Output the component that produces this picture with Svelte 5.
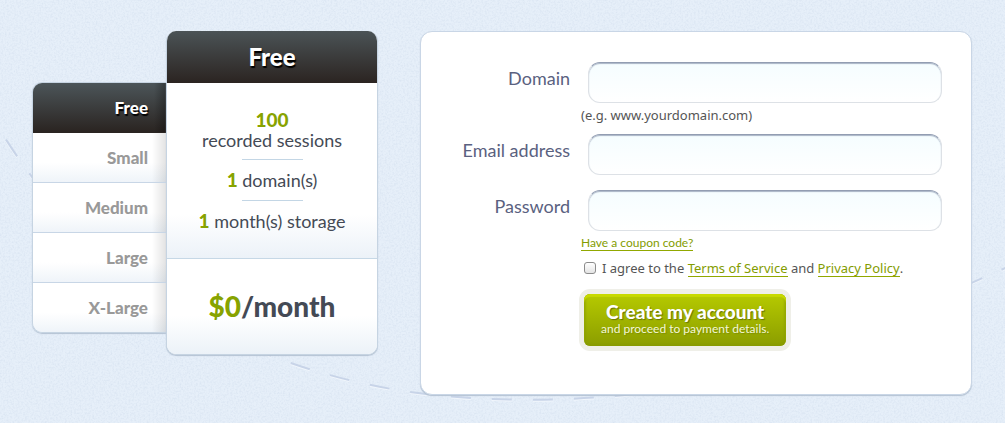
<script>
  const plans = ['Free', 'Small', 'Medium', 'Large', 'X-Large'];
  let selected = $state('Free');

  const fields = [
    { id: 'domain', label: 'Domain', type: 'text', hint: '(e.g. www.yourdomain.com)' },
    { id: 'email', label: 'Email address', type: 'email' },
    { id: 'password', label: 'Password', type: 'password' }
  ];
</script>

<main>
  <svg class="backdrop" aria-hidden="true">
    <filter id="linen" x="0" y="0" width="100%" height="100%">
      <feTurbulence type="fractalNoise" baseFrequency="0.55" numOctaves="3" seed="4" />
      <feColorMatrix values="0 0 0 0 0.6  0 0 0 0 0.69  0 0 0 0 0.82  0.9 0 0 0 -0.35" />
    </filter>
    <rect width="100%" height="100%" filter="url(#linen)" />
    <path class="stitch light" d="M-10 114C90 290 250 369 410 393C590 417 780 382 880 328Q945 295 1010 267" />
    <path class="stitch" d="M-10 113C90 289 250 368 410 392C590 416 780 381 880 327Q945 294 1010 266" />
  </svg>

  <section class="plans">
    <nav>
      {#each plans as plan}
        <button type="button" class="tab" class:active={plan === selected} onclick={() => (selected = plan)}>{plan}</button>
      {/each}
    </nav>
    <article>
      <h2>Free</h2>
      <ul>
        <li class="stacked"><b>100</b>recorded sessions</li>
        <li><b>1</b> domain(s)</li>
        <li><b>1</b> month(s) storage</li>
      </ul>
      <p class="price"><span>$0</span>/month</p>
    </article>
  </section>

  <form onsubmit={(e) => e.preventDefault()}>
    {#each fields as field}
      <div class="field">
        <label for={field.id}>{field.label}</label>
        <input class="text" id={field.id} type={field.type} />
        {#if field.hint}<small>{field.hint}</small>{/if}
      </div>
    {/each}
    <div class="extras">
      <a class="coupon" href="#coupon">Have a coupon code?</a>
      <div class="agree">
        <input id="agree" type="checkbox" />
        <span><label for="agree">I agree to the</label> <a href="#terms">Terms of Service</a> and <a href="#privacy">Privacy Policy</a>.</span>
      </div>
      <button class="submit" type="submit">
        <strong>Create my account</strong>
        <span>and proceed to payment details.</span>
      </button>
    </div>
  </form>
</main>

<style>
  :global(body) {
    background: #e6eff9;
  }
  main {
    position: relative;
    display: flex;
    align-items: flex-start;
    gap: 42px;
    min-height: 100vh;
    box-sizing: border-box;
    padding: 31px 33px 28px 32px;
    overflow: hidden;
    font-family: Lato, "Open Sans", sans-serif;
    color: #444a55;
  }
  .backdrop {
    position: absolute;
    inset: 0;
    width: 100%;
    height: 100%;
  }
  .stitch {
    fill: none;
    stroke: #c8d4e8;
    stroke-width: 2;
    stroke-dasharray: 20 21;
    stroke-dashoffset: 10;
  }
  .light {
    stroke: #f1f6fc;
  }

  .plans {
    position: relative;
    display: flex;
    flex: 0 0 346px;
    align-items: flex-start;
  }
  nav {
    flex: 1;
    margin-top: 51px;
    overflow: hidden;
    border: 1px solid #c6d4e2;
    border-right: 0;
    border-radius: 10px 0 0 10px;
    box-shadow: 0 1px 1px #b4c2d3;
  }
  .tab {
    display: block;
    width: 100%;
    height: 50px;
    padding: 0 18px 0 0;
    border: 0;
    border-bottom: 1px solid #c8d6e6;
    background:
      linear-gradient(to left, rgb(0 0 0 / 11%), transparent 14px),
      linear-gradient(#fff 60%, #eff4f9);
    font: 900 17px/48px Lato, sans-serif;
    text-align: right;
    color: #999;
    cursor: pointer;
  }
  .tab:last-child {
    height: 49px;
    border-bottom: 0;
  }
  .active {
    border-bottom-color: #2a2421;
    background: linear-gradient(to left, rgb(0 0 0 / 30%), transparent 12px), linear-gradient(#4c5559, #2a2421);
    color: #fff;
    text-shadow: 1px 2px 1px #000;
  }
  article {
    flex: 0 0 210px;
    overflow: hidden;
    border: 1px solid #c6d4e2;
    border-width: 0 1px 1px;
    border-radius: 10px;
    background: #fff;
    box-shadow: 0 1px 1px #b4c2d3;
    text-align: center;
  }
  h2 {
    margin: 0 -1px;
    background: linear-gradient(#4b5356, #2b2421);
    font-size: 24px;
    font-weight: 900;
    line-height: 52px;
    color: #fff;
    text-shadow: 1px 2px 1px #000;
  }
  ul {
    margin: 0;
    padding: 27px 0 17px;
    border-bottom: 1px solid #c6d8e6;
    background: linear-gradient(#fff 75%, #ecf2f8);
    list-style: none;
  }
  li {
    font-size: 18px;
    line-height: 40px;
  }
  li + li::before {
    content: "";
    display: block;
    width: 61px;
    height: 1px;
    margin: 0 auto;
    background: #c3d6e5;
  }
  .stacked {
    padding-bottom: 9px;
    line-height: 20px;
  }
  .stacked b {
    display: block;
  }
  b {
    font-size: 19px;
    font-weight: 900;
    color: #87a300;
  }
  .price {
    margin: 0;
    background: linear-gradient(#fff 60%, #ecf2f8);
    font-size: 28px;
    font-weight: 900;
    line-height: 95px;
  }
  .price span {
    color: #87a300;
  }

  form {
    position: relative;
    flex: 1;
    box-sizing: border-box;
    padding: 30px 29px 48px 0;
    border: 1px solid #c9d6e6;
    border-radius: 12px;
    background: #fff;
    box-shadow: 0 1px 1px #b4c2d3;
  }
  .field {
    display: grid;
    grid-template-columns: 149px 1fr;
    column-gap: 18px;
    margin-bottom: 15px;
  }
  .field label {
    font-size: 18px;
    line-height: 32px;
    text-align: right;
    color: #5a6180;
  }
  .text {
    box-sizing: border-box;
    width: 100%;
    height: 41px;
    padding: 0 12px;
    border: 1px solid #dde1e6;
    border-top-color: #929db2;
    border-radius: 12px;
    background: linear-gradient(#f5fdff, #fff);
    box-shadow: inset 0 1px 1px #a9b4c6;
    font: 16px Lato, sans-serif;
  }
  small {
    grid-column: 2;
    margin: 3px 0 -6px -7px;
    font: 13px/19px "Noto Sans", sans-serif;
    color: #555;
  }
  .extras {
    display: flex;
    flex-direction: column;
    align-items: flex-start;
    margin: -11px 0 0 160px;
  }
  a {
    border-bottom: 1px solid #91a800;
    color: #839c00;
    text-decoration: none;
  }
  .coupon {
    font-size: 12px;
    line-height: 15px;
  }
  .agree {
    display: flex;
    align-items: center;
    gap: 6px;
    margin: 7px 0 16px;
    padding-left: 3px;
    font: 13px/20px "Noto Sans", sans-serif;
    color: #555;
  }
  .agree a {
    display: inline-block;
    line-height: 16px;
  }
  .agree input {
    appearance: none;
    width: 12px;
    height: 12px;
    margin: 0;
    border: 1px solid #8c8c8c;
    border-radius: 3px;
    background: linear-gradient(#fff, #e4e4e4);
  }
  .agree input:checked {
    background: #87a300;
  }
  .submit {
    display: flex;
    flex-direction: column;
    align-items: center;
    margin-left: 3px;
    padding: 7px 17px 10px;
    border: 0;
    border-radius: 6px;
    background: linear-gradient(#b6ca00, #8b9d00);
    box-shadow:
      inset 0 3px 1px #c8da00,
      inset 0 0 3px 1px #879a00,
      0 0 0 5px #efefe8;
    font-family: Lato, sans-serif;
    color: #fff;
    cursor: pointer;
  }
  .submit strong {
    font-size: 19px;
    font-weight: 900;
    line-height: 21px;
    text-shadow: 1px 1px 1px #667500;
  }
  .submit span {
    font-size: 12px;
    line-height: 14px;
    color: #f4f7d5;
    text-shadow: 1px 1px 1px #7d8e00;
  }
</style>
